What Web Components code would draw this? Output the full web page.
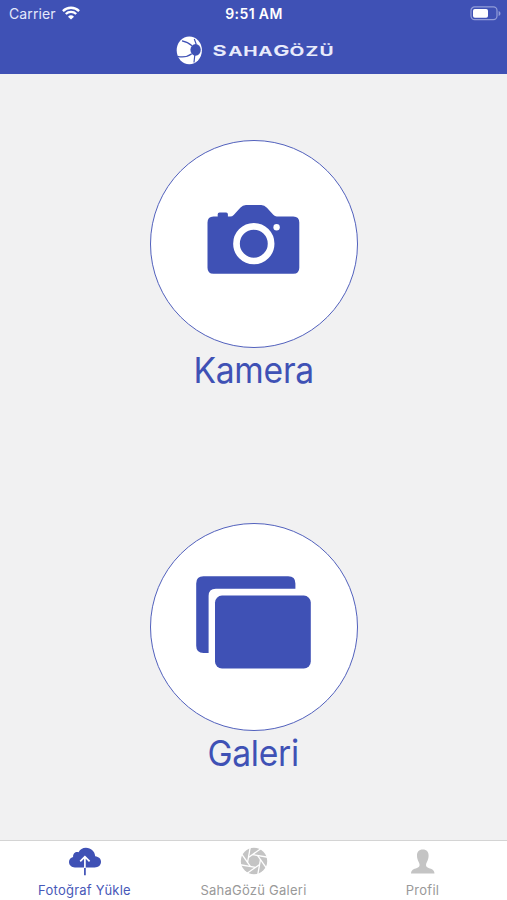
<!DOCTYPE html>
<html lang="tr">
<head>
<meta charset="utf-8">
<title>SahaGözü</title>
<style>
html, body { margin: 0; height: 100%; overflow: hidden; }
body { font-family: Inter, "Liberation Sans", sans-serif; --brand: #3f51b5; }
</style>
</head>
<body>
<saha-app></saha-app>
<script>
const define = (name, html) => {
  const tpl = document.createElement('template');
  tpl.innerHTML = html;
  customElements.define(name, class extends HTMLElement {
    constructor() {
      super();
      this.attachShadow({ mode: 'open' }).append(tpl.content.cloneNode(true));
    }
  });
};

define('status-bar', `
<style>
:host { display: grid; grid-template-columns: 1fr auto 1fr; align-items: center; height: 28px; color: #fff; font-size: 14px; line-height: 28px; }
.left { display: flex; align-items: center; gap: 6px; padding-left: 9px; letter-spacing: .12px; color: #e4e8fb; }
.left svg { margin-top: -2px; }
.time { font-weight: 600; font-size: 14px; letter-spacing: .4px; padding-left: 1px; }
.right { display: flex; justify-content: flex-end; padding-right: 6px; }
.right svg { margin-top: -2px; }
svg { display: block; }
</style>
<div class="left"><span>Carrier</span>
<svg width="18" height="14" viewBox="0 0 18 14" fill="none" stroke="#fff" stroke-width="2.3"><path d="M.9 5.1a11.5 11.5 0 0 1 16.2 0M3.8 8a7.4 7.4 0 0 1 10.4 0"/><path d="M9 13.6 6 10.7a4.3 4.3 0 0 1 6 0z" fill="#fff" stroke="none"/></svg></div>
<span class="time">9:51 AM</span>
<div class="right"><svg width="31" height="15" viewBox="0 0 31 15"><rect x="1" y=".9" width="26" height="12.8" rx="3.6" fill="none" stroke="#929dd9" stroke-width="1.2"/><rect x="3" y="2.9" width="15" height="8.8" rx="1.8" fill="#fff"/><path d="M28.6 5c2.5.8 2.5 4.2 0 5z" fill="#929dd9"/></svg></div>`);

define('brand-logo', `
<style>
:host { display: flex; justify-content: center; align-items: center; height: 44px; }
svg { display: block; }
text { font-family: Inter, sans-serif; font-weight: 700; fill: #e8ebfb; text-anchor: middle; }
</style>
<svg width="160" height="32" viewBox="174 33.5 160 32">
<ellipse cx="189.3" cy="49.8" rx="12.6" ry="13.9" fill="#fff"/>
<ellipse cx="195.6" cy="49.3" rx="5.2" ry="5.9" fill="#3f51b5"/>
<path d="M182 40.300C186 41 189 42.500 192 45.300M177.500 55.800C183 57 188 56 191.800 53.200M194.800 54.500l-.8 7.500M196.300 44l-2-5.500" fill="none" stroke="#3f51b5" stroke-width="1.200"/>
<text transform="translate(212.5 55) scale(1.48 1)" font-size="13"><tspan font-size="14.6" x="4.7">S</tspan><tspan x="15.500 25.700 35.700">AHA</tspan><tspan font-size="14.6" x="46.600">G</tspan><tspan x="57.100 67.200 77">ÖZÜ</tspan></text>
</svg>`);

define('action-button', `
<style>
:host { display: flex; flex-direction: column; align-items: center; width: 208px; color: var(--brand); }
.disc { box-sizing: border-box; width: 208px; height: 208px; border-radius: 50%; border: 1.4px solid #5261bd; background: #fff; }
.label { font-size: 36px; line-height: 45px; height: 44px; letter-spacing: -.3px; white-space: nowrap; transform: translateX(-.8px) scaleX(.935); }
</style>
<div class="disc"><slot name="icon"></slot></div>
<div class="label"><slot></slot></div>`);

define('camera-icon', `
<style>:host, svg { display: block; }</style>
<svg width="206" height="206" viewBox="151 141 206 206" fill="#3f51b5">
<path d="M213.5 216.500h4.200v-2.200q0-1.800 1.800-1.800h6.600q1.800 0 1.800 1.800v2.200h2.300q2 0 3.500-1.500l6.600-7.200q2.400-2.700 5.700-2.700h15.200q3.300 0 5.700 2.700l6.400 7q1.600 1.700 3.500 1.700h16.500q6 0 6 6v45.200q0 6-6 6h-79.800q-6 0-6-6v-45.200q0-6 6-6z"/>
<circle cx="253.8" cy="243.7" r="17.3" fill="none" stroke="#fff" stroke-width="6.7"/><circle cx="276.6" cy="227.3" r="3.2" fill="#fff"/></svg>`);

define('gallery-icon', `
<style>:host, svg { display: block; }</style>
<svg width="206" height="206" viewBox="151 524 206 206" fill="#3f51b5">
<path d="M203.5 576.3h84.700q7.200 0 7.200 7.200v5.300h-79.600q-7.200 0-7.200 7.200v57h-5.100q-7.300 0-7.300-7.200v-62.300q0-7.200 7.300-7.200z"/><rect x="215" y="595.6" width="95.8" height="73" rx="7"/></svg>`);

define('tab-item', `
<style>
:host { display: flex; flex: 1; flex-direction: column; align-items: center; color: #999; font-size: 13px; letter-spacing: .25px; }
.icon { height: 30px; margin-top: 5px; }
.label { line-height: 18px; margin-top: 5px; white-space: nowrap; }
:host([active]) { color: #4758b8; }
</style>
<div class="icon"><slot name="icon"></slot></div><div class="label"><slot></slot></div>`);

define('cloud-icon', `
<style>:host, svg { display: block; }</style>
<svg width="34" height="30" viewBox="68 846 34 30"><path d="M75 867.500c-3.600 0-6-2.300-6-5.400 0-2.800 1.600-4.600 4.100-5.200-.2-3.400 2.500-5.600 5.500-4.700 1.400-2.800 4-4.400 7.300-4.400 5.200 0 8.900 3.600 9.300 8.500 3.600.5 5.800 2.500 5.800 5.500 0 3.400-2.500 5.700-6.400 5.700z" fill="#3f51b5"/><path d="M84.900 867v8.300" stroke="#4758b8" stroke-width="1.8"/><path d="M84.900 868v-11.400M80.200 861.300l4.700-4.700 4.700 4.700" fill="none" stroke="#fff" stroke-width="1.7"/></svg>`);

define('aperture-icon', `
<style>:host, svg { display: block; }</style>
<svg width="30" height="30" viewBox="-15 -15 30 30"><circle r="13.2" fill="#c4c4c4"/><g id="b" stroke="#fff" stroke-width="1.3"></g></svg>`);

define('person-icon', `
<style>:host, svg { display: block; }</style>
<svg width="26" height="30" viewBox="409.5 846 26 30"><path d="M422.300 849.600c4 0 6 2.600 5.800 6.300-.1 1.300-.2 2.200-.5 3.200-.5 2.300-1.700 3.500-2 5-.3 2.100.3 3.200 2.500 3.900 3.500 1.100 5.600 2 5.900 5.600h-23.500c.3-3.600 2.500-4.500 6-5.600 2.200-.7 2.800-1.800 2.500-3.900-.3-1.500-1.500-2.700-2-5-.3-1-.4-1.900-.5-3.200-.2-3.700 1.800-6.300 5.800-6.300z" fill="#c4c4c4"/></svg>`);

define('saha-app', `
<style>
:host { display: flex; flex-direction: column; height: 900px; width: 507px; background: #f1f1f2; }
header { box-sizing: border-box; height: 74px; background: var(--brand); }
main { flex: 1; display: flex; flex-direction: column; align-items: center; gap: 131px; padding-top: 65.5px; padding-left: 1px; }
nav { box-sizing: border-box; display: flex; height: 60px; background: #fff; border-top: 1px solid #d4d4d4; }
</style>
<header><status-bar></status-bar><brand-logo></brand-logo></header>
<main>
<action-button><camera-icon slot="icon"></camera-icon>Kamera</action-button>
<action-button><gallery-icon slot="icon"></gallery-icon>Galeri</action-button>
</main>
<nav>
<tab-item active><cloud-icon slot="icon"></cloud-icon>Fotoğraf Yükle</tab-item>
<tab-item><aperture-icon slot="icon"></aperture-icon>SahaGözü Galeri</tab-item>
<tab-item><person-icon slot="icon"></person-icon>Profil</tab-item>
</nav>`);

// Eight blade edges, each running from a corner of the central octagon out past the rim.
const app = document.querySelector('saha-app');
const blades = app.shadowRoot.querySelector('aperture-icon').shadowRoot.getElementById('b');
for (let i = 0; i < 8; i++) {
  const line = document.createElementNS('http://www.w3.org/2000/svg', 'path');
  line.setAttribute('d', 'M-2.6 -6.1H13');
  line.setAttribute('transform', `rotate(${i * 45 + 10})`);
  blades.append(line);
}
</script>
</body>
</html>
